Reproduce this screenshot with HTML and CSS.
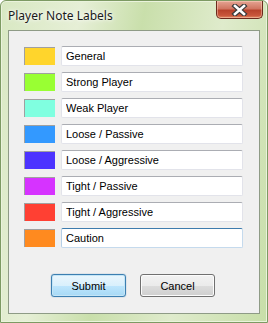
FILE: index.html
```html
<!DOCTYPE html>
<html lang="en">
<head>
    <meta charset="UTF-8">
    <title>Player Note Labels</title>
    <link rel="stylesheet" href="styles.css">
</head>
<body>

<div class="window">
    <div class="titlebar">
        <span class="title">Player Note Labels</span>
        <div class="close-btn">
            <svg width="17" height="12" viewBox="0 0 17 12">
                <path d="M4 2 L13 10 M13 2 L4 10" stroke="#3a3a3a" stroke-width="5" stroke-linecap="square"/>
                <path d="M4 2 L13 10 M13 2 L4 10" stroke="#ffffff" stroke-width="2.6" stroke-linecap="square"/>
            </svg>
        </div>
    </div>

    <div class="client">
        <div class="labels">
            <div class="row"><span class="swatch" style="background:#ffd52c"></span><input class="field" type="text" value="General"></div>
            <div class="row"><span class="swatch" style="background:#99ff33"></span><input class="field" type="text" value="Strong Player"></div>
            <div class="row"><span class="swatch" style="background:#80ffe0"></span><input class="field" type="text" value="Weak Player"></div>
            <div class="row"><span class="swatch" style="background:#3399ff"></span><input class="field" type="text" value="Loose / Passive"></div>
            <div class="row"><span class="swatch" style="background:#4c33ff"></span><input class="field" type="text" value="Loose / Aggressive"></div>
            <div class="row"><span class="swatch" style="background:#d633ff"></span><input class="field" type="text" value="Tight / Passive"></div>
            <div class="row"><span class="swatch" style="background:#ff4033"></span><input class="field" type="text" value="Tight / Aggressive"></div>
            <div class="row"><span class="swatch" style="background:#ff8a1f"></span><input class="field focused" type="text" value="Caution"></div>
        </div>

        <div class="buttons">
            <button class="btn default">Submit</button>
            <button class="btn">Cancel</button>
        </div>
    </div>
</div>

</body>
</html>
```

FILE: styles.css
```css
body {
    margin: 0;
    padding: 0;
    background: #ffffff;
    font-family: "Liberation Sans", Arial, sans-serif;
}
.window {
    width: 268px;
    height: 323px;
    box-sizing: border-box;
    border: 1px solid #7d9a63;
    border-radius: 6px 6px 0 0;
    background: linear-gradient(100deg, #d8e8c2 0%, #e6efd6 25%, #c9dfab 45%, #dfebcc 70%, #c7dea8 100%);
    display: flex;
    flex-direction: column;
    box-shadow: inset 0 0 0 1px #eaf3dc;
}
.titlebar {
    height: 29px;
    display: flex;
    justify-content: space-between;
    align-items: flex-start;
    padding: 0 4px 0 7px;
}
.title {
    font-family: "Noto Sans", sans-serif;
    font-size: 12px;
    color: #1a1a1a;
    margin-top: 6px;
    text-shadow: 0 0 6px #ffffff, 0 0 3px #ffffff;
}
.close-btn {
    width: 47px;
    height: 18px;
    box-sizing: border-box;
    border: 1px solid #6b2a1d;
    border-top: none;
    border-radius: 0 0 5px 5px;
    background: linear-gradient(#e5a493 0%, #d07662 45%, #b8432c 55%, #c9563b 85%, #e08a63 100%);
    display: flex;
    align-items: center;
    justify-content: center;
    box-shadow: inset 0 0 0 1px rgba(255, 220, 200, 0.45);
}
.close-btn svg {
    display: block;
}
.client {
    flex: 1;
    margin: 0 7px 8px 7px;
    background: #f0f0f0;
    border: 1px solid #8e9b86;
    display: flex;
    flex-direction: column;
    padding: 15px 16px 16px 15px;
}
.labels {
    display: flex;
    flex-direction: column;
    gap: 6px;
}
.row {
    display: flex;
    align-items: center;
    gap: 6px;
}
.swatch {
    width: 31px;
    height: 18px;
    box-sizing: border-box;
    border-top: 1px solid #a0a0a0;
    border-left: 1px solid #a0a0a0;
}
.field {
    width: 182px;
    height: 20px;
    box-sizing: border-box;
    margin: 0;
    padding: 0 4px;
    font-family: "Liberation Sans", Arial, sans-serif;
    font-size: 11px;
    color: #000000;
    background: #ffffff;
    border: 1px solid #e2e3ea;
    border-top-color: #abadb3;
    border-radius: 2px;
    outline: none;
}
.field.focused {
    border-color: #c5daed;
    border-top-color: #3d7bad;
    border-left-color: #b5cfe7;
}
.buttons {
    display: flex;
    justify-content: center;
    gap: 14px;
    margin-top: 26px;
    padding-right: 1px;
}
.btn {
    width: 75px;
    height: 23px;
    box-sizing: border-box;
    font-family: "Liberation Sans", Arial, sans-serif;
    font-size: 11px;
    color: #000000;
    border: 1px solid #707070;
    border-radius: 3px;
    background: linear-gradient(#f2f2f2 0%, #ebebeb 50%, #dddddd 50%, #cfcfcf 100%);
    box-shadow: inset 0 0 0 1px #fcfcfc;
    padding: 0;
}
.btn.default {
    border-color: #3c7fb1;
    background: linear-gradient(#eaf6fd 0%, #d9f0fc 50%, #bee6fd 50%, #a7d9f5 100%);
    box-shadow: inset 0 0 0 1px #c4e5f6, 0 0 1px #3c7fb1;
}
```
